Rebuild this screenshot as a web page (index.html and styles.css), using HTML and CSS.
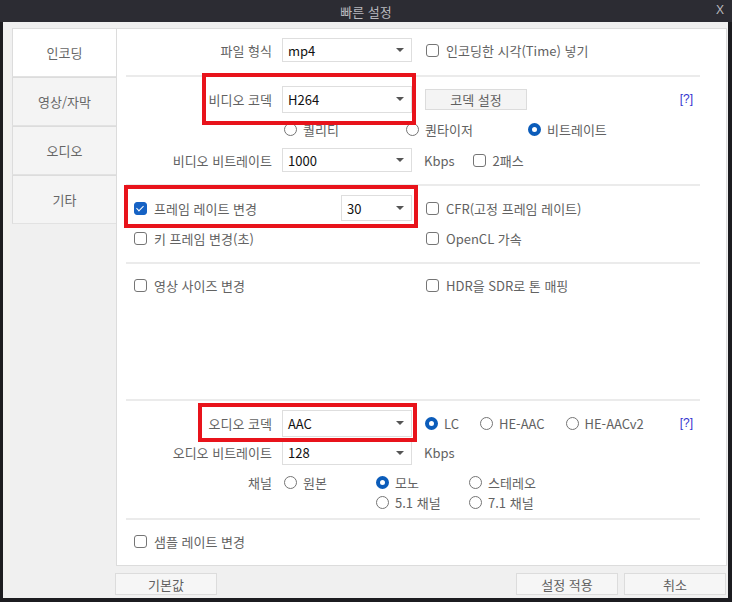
FILE: index.html
```html
<!DOCTYPE html>
<html lang="ko">
<head>
    <meta charset="UTF-8">
    <meta name="viewport" content="width=device-width, initial-scale=1.0">
    <title>빠른 설정</title>
    <link rel="stylesheet" href="styles.css">
</head>
<body>
    <div class="window">
        <div class="titlebar">
            <span class="title">빠른 설정</span>
            <span class="close">X</span>
        </div>

        <div class="frame">
            <div class="content">
                <div class="tabs">
                    <div class="tab active">인코딩</div>
                    <div class="tab">영상/자막</div>
                    <div class="tab">오디오</div>
                    <div class="tab">기타</div>
                </div>

                <div class="panel">
                    <div class="section sec-file">
                        <div class="row">
                            <div class="label">파일 형식</div>
                            <div class="select s-file"><span>mp4</span><i class="arrow"></i></div>
                            <label class="check ml-right"><i class="box"></i>인코딩한 시각(Time) 넣기</label>
                        </div>
                    </div>
                    <div class="sep"></div>

                    <div class="section sec-video">
                        <div class="row">
                            <div class="label">비디오 코덱</div>
                            <div class="select s-codec"><span>H264</span><i class="arrow"></i></div>
                            <button class="btn codec-btn">코덱 설정</button>
                            <span class="help">[?]</span>
                        </div>
                        <div class="row row-modes">
                            <label class="radio w122"><i class="dot"></i>퀄리티</label>
                            <label class="radio w122"><i class="dot"></i>퀀타이저</label>
                            <label class="radio"><i class="dot on"></i>비트레이트</label>
                        </div>
                        <div class="row">
                            <div class="label">비디오 비트레이트</div>
                            <div class="select s-rate"><span>1000</span><i class="arrow"></i></div>
                            <span class="unit">Kbps</span>
                            <label class="check"><i class="box"></i>2패스</label>
                        </div>
                    </div>
                    <div class="sep"></div>

                    <div class="section sec-frame">
                        <div class="row">
                            <div class="left">
                                <label class="check"><i class="box on"></i>프레임 레이트 변경</label>
                                <div class="select s-fps"><span>30</span><i class="arrow"></i></div>
                            </div>
                            <label class="check"><i class="box"></i>CFR(고정 프레임 레이트)</label>
                        </div>
                        <div class="row">
                            <div class="left">
                                <label class="check"><i class="box"></i>키 프레임 변경(초)</label>
                            </div>
                            <label class="check"><i class="box"></i>OpenCL 가속</label>
                        </div>
                    </div>
                    <div class="sep"></div>

                    <div class="section sec-size">
                        <div class="row">
                            <div class="left">
                                <label class="check"><i class="box"></i>영상 사이즈 변경</label>
                            </div>
                            <label class="check"><i class="box"></i>HDR을 SDR로 톤 매핑</label>
                        </div>
                    </div>
                    <div class="sep"></div>

                    <div class="section sec-audio">
                        <div class="row">
                            <div class="label">오디오 코덱</div>
                            <div class="select s-acodec"><span>AAC</span><i class="arrow"></i></div>
                            <label class="radio ml-radio gap"><i class="dot on"></i>LC</label>
                            <label class="radio gap"><i class="dot"></i>HE-AAC</label>
                            <label class="radio"><i class="dot"></i>HE-AACv2</label>
                            <span class="help">[?]</span>
                        </div>
                        <div class="row row-abit">
                            <div class="label">오디오 비트레이트</div>
                            <div class="select s-arate"><span>128</span><i class="arrow"></i></div>
                            <span class="unit">Kbps</span>
                        </div>
                        <div class="row row-ch first">
                            <div class="label">채널</div>
                            <label class="radio ch w92"><i class="dot"></i>원본</label>
                            <label class="radio w93"><i class="dot on"></i>모노</label>
                            <label class="radio"><i class="dot"></i>스테레오</label>
                        </div>
                        <div class="row row-ch second">
                            <label class="radio w93"><i class="dot"></i>5.1 채널</label>
                            <label class="radio"><i class="dot"></i>7.1 채널</label>
                        </div>
                    </div>
                    <div class="sep"></div>

                    <div class="section sec-sample">
                        <div class="row">
                            <label class="check"><i class="box"></i>샘플 레이트 변경</label>
                        </div>
                    </div>
                </div>
            </div>

            <div class="footer">
                <button class="btn foot-btn">기본값</button>
                <button class="btn foot-btn apply">설정 적용</button>
                <button class="btn foot-btn">취소</button>
            </div>
        </div>

        <!-- highlight boxes drawn over the form -->
        <div class="mark mark-vcodec"></div>
        <div class="mark mark-fps"></div>
        <div class="mark mark-acodec"></div>
    </div>
</body>
</html>
```

FILE: styles.css
```css
body {
    margin: 0;
    font-family: "Noto Sans CJK KR", "Noto Sans", sans-serif;
    font-size: 13px;
    color: #626262;
}

.window {
    position: relative;
    width: 732px;
    height: 602px;
    overflow: hidden;
}

.titlebar {
    height: 22px;
    background-color: #2c2c33;
    color: #b9b9be;
    display: flex;
    align-items: center;
    justify-content: center;
    position: relative;
    font-size: 13px;
}

.close {
    position: absolute;
    right: 8px;
    top: 3px;
    font-family: "Liberation Sans", sans-serif;
    font-size: 12px;
}

.frame {
    box-sizing: border-box;
    height: 580px;
    border-left: 3px solid #1c1c20;
    border-right: 4px solid #1c1c20;
    border-bottom: 4px solid #1c1c20;
    background-color: #f0f0f0;
}

.content {
    display: flex;
    padding: 6px 0 0 9px;
}

.tabs {
    width: 104px;
}

.tab {
    box-sizing: border-box;
    height: 49px;
    border: 1px solid #dcdcdc;
    border-right: none;
    border-bottom: 1px solid #e2e2e2;
    background-color: #f4f4f4;
    display: flex;
    align-items: center;
    justify-content: center;
    color: #666;
}

.tab.active {
    background-color: #fff;
}

.panel {
    box-sizing: border-box;
    width: 611px;
    height: 538px;
    border: 1px solid #dcdcdc;
    background-color: #fff;
    padding: 0 26px 0 9px;
}

.sep {
    height: 2px;
    background-color: #ebebeb;
}

.row {
    display: flex;
    align-items: center;
    height: 30px;
}

.label {
    width: 146px;
    text-align: right;
    white-space: nowrap;
}

.select {
    box-sizing: border-box;
    width: 130px;
    height: 24px;
    margin-left: 10px;
    border: 1px solid #dedede;
    background-color: #fff;
    color: #111;
    display: flex;
    align-items: center;
    justify-content: space-between;
    padding: 0 7px 0 5px;
}

.arrow {
    width: 0;
    height: 0;
    border-left: 4px solid transparent;
    border-right: 4px solid transparent;
    border-top: 4px solid #555;
}

.s-codec, .s-acodec {
    height: 27px;
}

.s-arate {
    height: 25px;
}

.s-fps {
    width: 71px;
    height: 26px;
    margin-left: auto;
    margin-right: 14px;
}

.check, .radio {
    display: flex;
    align-items: center;
    white-space: nowrap;
}

.box {
    box-sizing: border-box;
    width: 13px;
    height: 13px;
    border: 1.5px solid #757575;
    border-radius: 3px;
    margin-right: 7px;
    background-color: #fff;
    position: relative;
}

.box.on {
    background-color: #1662c4;
    border-color: #1662c4;
}

.box.on::after {
    content: "";
    position: absolute;
    left: 3px;
    top: 1px;
    width: 3px;
    height: 6px;
    border-right: 1.5px solid #fff;
    border-bottom: 1.5px solid #fff;
    transform: rotate(45deg);
}

.dot {
    box-sizing: border-box;
    width: 13px;
    height: 13px;
    border: 1.5px solid #757575;
    border-radius: 50%;
    margin-right: 6px;
    background-color: #fff;
}

.dot.on {
    border: 4px solid #0b5cba;
}

.ml-right {
    margin-left: 14px;
}

.btn {
    font-family: inherit;
    font-size: 13px;
    color: #606060;
    background-color: #f4f4f4;
    border: 1px solid #dcdcdc;
    padding: 0;
    cursor: pointer;
}

.codec-btn {
    width: 102px;
    height: 21px;
    margin-left: 13px;
}

.help {
    margin-left: auto;
    margin-right: 7px;
    color: #3434d0;
    font-family: "Liberation Sans", sans-serif;
    font-size: 12px;
}

.unit {
    margin-left: 12px;
    margin-right: 18px;
}

/* section spacing follows the reference rows */
.sec-file {
    padding: 6px 0 10px;
}

.sec-video {
    padding: 7px 0 9px;
}

.sec-video .row-modes {
    height: 31px;
    padding-left: 158px;
}

.w122 {
    width: 122px;
}

.w92 {
    width: 92px;
}

.w93 {
    width: 93px;
}

.sec-frame {
    padding: 7px 0 9px 8px;
}

.left {
    width: 292px;
    display: flex;
    align-items: center;
}

.sec-size {
    box-sizing: border-box;
    height: 135px;
    padding: 6px 0 0 8px;
}

.sec-audio {
    padding: 7px 0 6px;
}

.ml-radio {
    margin-left: 13px;
}

.gap {
    margin-right: 21px;
}

.row-abit {
    height: 29px;
}

.row-ch {
    height: 20px;
}

.row-ch.first {
    margin-top: 5px;
}

.row-ch .ch {
    margin-left: 12px;
}

.row-ch.second {
    padding-left: 250px;
}

.sec-sample {
    padding: 6px 0 0 8px;
}

.footer {
    display: flex;
    padding: 7px 2px 0 112px;
}

.foot-btn {
    width: 102px;
    height: 22px;
    background-color: #f6f6f6;
}

.foot-btn.apply {
    margin-left: auto;
    margin-right: 6px;
}

.mark {
    position: absolute;
    box-sizing: border-box;
    border: 4px solid #e8131b;
}

.mark-vcodec {
    left: 202px;
    top: 73px;
    width: 214px;
    height: 52px;
}

.mark-fps {
    left: 124px;
    top: 185px;
    width: 294px;
    height: 43px;
}

.mark-acodec {
    left: 198px;
    top: 403px;
    width: 219px;
    height: 39px;
}
```
